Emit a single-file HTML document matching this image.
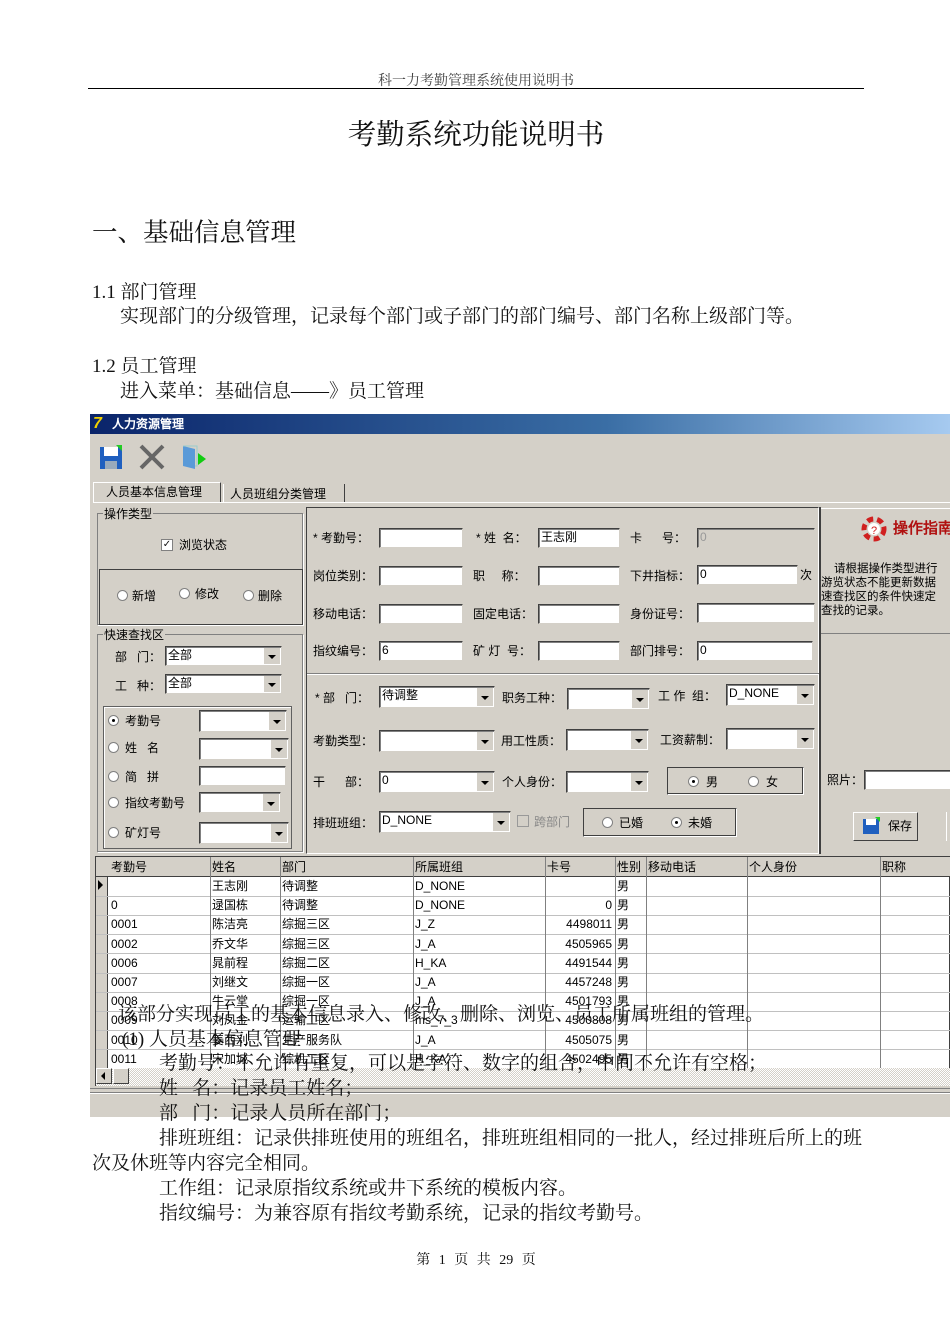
<!DOCTYPE html>
<html><head><meta charset="utf-8"><style>
*{margin:0;padding:0;box-sizing:border-box}
body{width:950px;height:1344px;background:#fff;position:relative;overflow:hidden;font-family:"Liberation Serif","Noto Serif CJK SC",serif;color:#111}
.a{position:absolute;white-space:nowrap}
.t{font-size:19px;line-height:20px}
.u{font-family:"Liberation Sans","WenQuanYi Zen Hei",sans-serif;font-size:12px;line-height:14px;color:#000;position:absolute;white-space:nowrap}
.i{position:absolute;background:#fff;border:1px solid #404040;border-right-color:#d4d0c8;border-bottom-color:#d4d0c8;box-shadow:inset 1px 1px 0 #808080;font-family:"Liberation Sans",sans-serif;font-size:12px;line-height:16px;padding-left:2px;color:#000}
.c:after{content:"";position:absolute;right:1px;top:1px;bottom:1px;width:16px;background:#d4d0c8;border-left:1px solid #fff}
.c:before{content:"";position:absolute;right:5px;top:50%;margin-top:-1px;border:4px solid transparent;border-top:4px solid #000;border-bottom:0;z-index:2}
.g{position:absolute;border:1px solid #808080;box-shadow:1px 1px 0 #fff}
.r{position:absolute;width:11px;height:11px;border-radius:50%;background:#fff;border:1px solid #808080}
.r.on:after{content:"";position:absolute;left:3px;top:3px;width:3px;height:3px;border-radius:50%;background:#000}
.gr{position:absolute;font-family:"Liberation Sans","WenQuanYi Zen Hei",sans-serif;font-size:12px;line-height:19px;color:#000}
</style></head><body>
<div class="a" style="left:0;width:952px;top:70px;text-align:center;font-size:14px;color:#444">科一力考勤管理系统使用说明书</div>
<div class="a" style="left:88px;width:776px;top:88px;height:1px;background:#000"></div>
<div class="a" style="left:0;width:952px;top:112px;text-align:center;font-size:28.5px">考勤系统功能说明书</div>
<div class="a" style="left:92px;top:213px;font-size:25.5px">一、基础信息管理</div>
<div class="a t" style="left:92px;top:283px">1.1 部门管理</div>
<div class="a t" style="left:120px;top:307px">实现部门的分级管理，记录每个部门或子部门的部门编号、部门名称上级部门等。</div>
<div class="a t" style="left:92px;top:357px">1.2 员工管理</div>
<div class="a t" style="left:120px;top:382px">进入菜单：基础信息——》员工管理</div>

<div class="a" style="left:90px;top:414px;width:860px;height:703px;background:#d4d0c8"></div>
<div class="a" style="left:90px;top:414px;width:860px;height:20px;background:linear-gradient(90deg,#0a246a,#3a6ea5 60%,#a6caf0)"></div>
<div class="a" style="left:93px;top:415px;font:bold italic 16px 'Liberation Sans';color:#f0d000">7</div>
<div class="u" style="left:112px;top:417px;color:#fff;font-weight:bold">人力资源管理</div>
<svg class="a" style="left:98px;top:443px" width="30" height="28"><rect x="2" y="4" width="22" height="22" fill="#1f5fbf"/><rect x="6" y="4" width="14" height="9" fill="#fff"/><rect x="7" y="18" width="12" height="8" fill="#9ab"/><path d="M18 2l6 0 0 6z" fill="#2c2"/></svg>
<svg class="a" style="left:138px;top:443px" width="28" height="28"><path d="M3 3L25 25M25 3L3 25" stroke="#666" stroke-width="4"/></svg>
<svg class="a" style="left:180px;top:443px" width="30" height="28"><path d="M3 3l12 3v20l-12-3z" fill="#5a9ad8"/><path d="M3 3h14v20h-2" fill="none" stroke="#9cc"/><path d="M18 10l8 6-8 6z" fill="#1c1"/></svg>
<div class="a" style="left:93px;top:482px;width:128px;height:20px;border:1px solid #fff;border-right-color:#404040;border-bottom:0"></div>
<div class="u" style="left:106px;top:485px">人员基本信息管理</div>
<div class="a" style="left:223px;top:484px;width:122px;height:18px;border-left:1px solid #fff;border-right:1px solid #404040"></div>
<div class="u" style="left:230px;top:487px">人员班组分类管理</div>
<div class="a" style="left:93px;top:502px;width:857px;height:1px;background:#fff"></div>

<div class="g" style="left:97px;top:513px;width:206px;height:112px"></div>
<div class="u" style="left:103px;top:507px;background:#d4d0c8;padding:0 1px">操作类型</div>
<div class="a" style="left:161px;top:539px;width:12px;height:12px;background:#fff;border:1px solid #808080;font:bold 10px/10px 'DejaVu Sans';text-align:center">✓</div>
<div class="u" style="left:179px;top:538px">浏览状态</div>
<div class="a" style="left:99px;top:569px;width:204px;height:56px;border:1px solid #404040"></div>
<div class="r" style="left:117px;top:590px"></div><div class="u" style="left:132px;top:589px">新增</div>
<div class="r" style="left:179px;top:588px"></div><div class="u" style="left:195px;top:587px">修改</div>
<div class="r" style="left:243px;top:590px"></div><div class="u" style="left:258px;top:589px">删除</div>
<div class="g" style="left:97px;top:634px;width:206px;height:218px"></div>
<div class="u" style="left:103px;top:628px;background:#d4d0c8;padding:0 1px">快速查找区</div>
<div class="u" style="left:115px;top:650px">部&nbsp;&nbsp;&nbsp;门：</div>
<div class="i c" style="left:165px;top:646px;width:117px;height:20px">全部</div>
<div class="u" style="left:115px;top:679px">工&nbsp;&nbsp;&nbsp;种：</div>
<div class="i c" style="left:165px;top:674px;width:117px;height:20px">全部</div>
<div class="a" style="left:103px;top:706px;width:189px;height:143px;border:1px solid #606060;box-shadow:inset 1px 1px 0 #fff"></div>
<div class="r on" style="left:108px;top:715px"></div><div class="u" style="left:125px;top:714px">考勤号</div>
<div class="i c" style="left:199px;top:710px;width:88px;height:22px"></div>
<div class="r" style="left:108px;top:742px"></div><div class="u" style="left:125px;top:741px">姓&nbsp;&nbsp;&nbsp;名</div>
<div class="i c" style="left:199px;top:738px;width:90px;height:22px"></div>
<div class="r" style="left:108px;top:771px"></div><div class="u" style="left:125px;top:770px">简&nbsp;&nbsp;&nbsp;拼</div>
<div class="i" style="left:199px;top:766px;width:87px;height:20px"></div>
<div class="r" style="left:108px;top:797px"></div><div class="u" style="left:125px;top:796px">指纹考勤号</div>
<div class="i c" style="left:199px;top:792px;width:82px;height:21px"></div>
<div class="r" style="left:108px;top:827px"></div><div class="u" style="left:125px;top:826px">矿灯号</div>
<div class="i c" style="left:199px;top:822px;width:90px;height:22px"></div>

<div class="a" style="left:306px;top:507px;width:513px;height:347px;border:1px solid #404040;border-right-color:#fff;border-bottom-color:#fff"></div>
<div class="a" style="left:307px;top:673px;width:512px;height:2px;border-top:1px solid #808080;border-bottom:1px solid #fff"></div>
<div class="u" style="left:313px;top:531px">* 考勤号：</div><div class="i" style="left:379px;top:528px;width:84px;height:20px"></div>
<div class="u" style="left:476px;top:531px">* 姓&nbsp;&nbsp;名：</div><div class="i" style="left:538px;top:528px;width:82px;height:20px">王志刚</div>
<div class="u" style="left:630px;top:531px">卡&nbsp;&nbsp;&nbsp;&nbsp;&nbsp;&nbsp;号：</div><div class="i" style="left:697px;top:528px;width:118px;height:20px;background:#d4d0c8;color:#999">0</div>
<div class="u" style="left:313px;top:569px">岗位类别：</div><div class="i" style="left:379px;top:566px;width:84px;height:20px"></div>
<div class="u" style="left:473px;top:569px">职&nbsp;&nbsp;&nbsp;&nbsp;&nbsp;称：</div><div class="i" style="left:538px;top:566px;width:82px;height:20px"></div>
<div class="u" style="left:630px;top:569px">下井指标：</div><div class="i" style="left:697px;top:565px;width:101px;height:20px">0</div><div class="u" style="left:800px;top:568px">次</div>
<div class="u" style="left:313px;top:607px">移动电话：</div><div class="i" style="left:379px;top:604px;width:84px;height:20px"></div>
<div class="u" style="left:473px;top:607px">固定电话：</div><div class="i" style="left:538px;top:604px;width:82px;height:20px"></div>
<div class="u" style="left:630px;top:607px">身份证号：</div><div class="i" style="left:697px;top:603px;width:118px;height:20px"></div>
<div class="u" style="left:313px;top:644px">指纹编号：</div><div class="i" style="left:379px;top:641px;width:84px;height:20px">6</div>
<div class="u" style="left:473px;top:644px">矿&nbsp;灯&nbsp;&nbsp;号：</div><div class="i" style="left:538px;top:641px;width:82px;height:20px"></div>
<div class="u" style="left:630px;top:644px">部门排号：</div><div class="i" style="left:697px;top:641px;width:116px;height:20px">0</div>
<div class="u" style="left:315px;top:691px">* 部&nbsp;&nbsp;&nbsp;门：</div><div class="i c" style="left:379px;top:686px;width:116px;height:22px">待调整</div>
<div class="u" style="left:502px;top:691px">职务工种：</div><div class="i c" style="left:567px;top:688px;width:83px;height:22px"></div>
<div class="u" style="left:658px;top:689px">工&nbsp;作&nbsp;&nbsp;组：</div><div class="i c" style="left:726px;top:684px;width:89px;height:22px">D_NONE</div>
<div class="u" style="left:313px;top:734px">考勤类型：</div><div class="i c" style="left:379px;top:730px;width:116px;height:22px"></div>
<div class="u" style="left:501px;top:734px">用工性质：</div><div class="i c" style="left:566px;top:729px;width:83px;height:22px"></div>
<div class="u" style="left:660px;top:733px">工资薪制：</div><div class="i c" style="left:726px;top:728px;width:89px;height:22px"></div>
<div class="u" style="left:313px;top:775px">干&nbsp;&nbsp;&nbsp;&nbsp;&nbsp;&nbsp;部：</div><div class="i c" style="left:379px;top:771px;width:116px;height:22px">0</div>
<div class="u" style="left:502px;top:775px">个人身份：</div><div class="i c" style="left:566px;top:771px;width:83px;height:22px"></div>
<div class="a" style="left:667px;top:767px;width:137px;height:28px;border:1px solid #404040;border-right-color:#fff;border-bottom-color:#fff;box-shadow:inset -1px -1px 0 #404040"></div>
<div class="r on" style="left:688px;top:776px"></div><div class="u" style="left:706px;top:775px">男</div>
<div class="r" style="left:748px;top:776px"></div><div class="u" style="left:766px;top:775px">女</div>
<div class="u" style="left:313px;top:816px">排班班组：</div><div class="i c" style="left:379px;top:811px;width:132px;height:22px">D_NONE</div>
<div class="a" style="left:517px;top:815px;width:12px;height:12px;border:1px solid #999;background:#d4d0c8"></div><div class="u" style="left:534px;top:815px;color:#888">跨部门</div>
<div class="a" style="left:583px;top:808px;width:154px;height:29px;border:1px solid #404040;border-right-color:#fff;border-bottom-color:#fff;box-shadow:inset -1px -1px 0 #404040"></div>
<div class="r" style="left:602px;top:817px"></div><div class="u" style="left:619px;top:816px">已婚</div>
<div class="r on" style="left:671px;top:817px"></div><div class="u" style="left:688px;top:816px">未婚</div>

<div class="a" style="left:820px;top:508px;width:130px;height:126px;border:1px solid #fff;border-right:0;border-bottom-color:#808080"></div>
<div class="a" style="left:819px;top:507px;width:2px;height:347px;background:#404040"></div>
<svg class="a" style="left:859px;top:515px" width="30" height="28"><circle cx="15" cy="14" r="10" fill="none" stroke="#d02020" stroke-width="5" stroke-dasharray="6 4"/><circle cx="15" cy="14" r="6" fill="#fff"/><text x="12" y="19" font-size="11" fill="#d02020" font-family="Liberation Sans">?</text></svg>
<div class="u" style="left:893px;top:520px;color:#b01010;font-weight:bold;font-size:15px;line-height:17px">操作指南</div>
<div class="u" style="left:834px;top:562px;font-size:11.5px;line-height:14px">请根据操作类型进行</div>
<div class="u" style="left:821px;top:576px;font-size:11.5px;line-height:14px">游览状态不能更新数据</div>
<div class="u" style="left:821px;top:590px;font-size:11.5px;line-height:14px">速查找区的条件快速定</div>
<div class="u" style="left:821px;top:604px;font-size:11.5px;line-height:14px">查找的记录。</div>
<div class="u" style="left:827px;top:773px">照片：</div><div class="i" style="left:864px;top:770px;width:90px;height:20px"></div>
<div class="a" style="left:853px;top:812px;width:65px;height:29px;border:1px solid #fff;border-right-color:#404040;border-bottom-color:#404040"></div>
<svg class="a" style="left:862px;top:816px" width="20" height="20"><rect x="1" y="3" width="16" height="15" fill="#1f5fbf"/><rect x="4" y="3" width="10" height="6" fill="#fff"/><path d="M13 1h5v5z" fill="#2c2"/></svg>
<div class="u" style="left:888px;top:819px">保存</div>
<div class="a" style="left:946px;top:812px;width:4px;height:29px;border-left:1px solid #fff"></div>

<div class="a" style="left:95px;top:856px;width:855px;height:230px;background:#fff;border:1px solid #404040"></div>
<div class="a" style="left:96px;top:857px;width:854px;height:20px;background:#d4d0c8;border-bottom:1px solid #404040"></div>
<div class="a" style="left:96px;top:877px;width:12px;height:191px;background:#d4d0c8;border-right:1px solid #404040"></div>
<div class="a" style="left:98px;top:880px;border:5px solid transparent;border-left:5px solid #000;border-right:0"></div>
<div class="a" style="left:96px;top:1068px;width:854px;height:18px;background:repeating-conic-gradient(#d4d0c8 0 25%,#fff 0 50%) 0 0/2px 2px"></div>
<div class="a" style="left:96px;top:1068px;width:16px;height:16px;background:#d4d0c8;border:1px solid #fff;border-right-color:#404040;border-bottom-color:#404040"></div>
<div class="a" style="left:113px;top:1068px;width:16px;height:16px;background:#d4d0c8;border:1px solid #fff;border-right-color:#404040;border-bottom-color:#404040"></div>
<div class="a" style="left:101px;top:1072px;border:4px solid transparent;border-right:4px solid #000;border-left:0"></div>
<svg class="a" style="left:96px;top:857px" width="854" height="211">
<g stroke="#c0c0c0"><line x1="0" y1="39.5" x2="854" y2="39.5"/><line x1="0" y1="58.5" x2="854" y2="58.5"/><line x1="0" y1="77.5" x2="854" y2="77.5"/><line x1="0" y1="96.5" x2="854" y2="96.5"/><line x1="0" y1="116.5" x2="854" y2="116.5"/><line x1="0" y1="135.5" x2="854" y2="135.5"/><line x1="0" y1="154.5" x2="854" y2="154.5"/><line x1="0" y1="173.5" x2="854" y2="173.5"/><line x1="0" y1="192.5" x2="854" y2="192.5"/></g>
<g stroke="#808080"><line x1="114.5" y1="0" x2="114.5" y2="211"/><line x1="184.5" y1="0" x2="184.5" y2="211"/><line x1="317.5" y1="0" x2="317.5" y2="211"/><line x1="449.5" y1="0" x2="449.5" y2="211"/><line x1="519.5" y1="0" x2="519.5" y2="211"/><line x1="550.5" y1="0" x2="550.5" y2="211"/><line x1="651.5" y1="0" x2="651.5" y2="211"/><line x1="784.5" y1="0" x2="784.5" y2="211"/></g>
</svg>
<div class="gr" style="left:111px;top:858px">考勤号</div><div class="gr" style="left:212px;top:858px">姓名</div><div class="gr" style="left:282px;top:858px">部门</div><div class="gr" style="left:415px;top:858px">所属班组</div><div class="gr" style="left:547px;top:858px">卡号</div><div class="gr" style="left:617px;top:858px">性别</div><div class="gr" style="left:648px;top:858px">移动电话</div><div class="gr" style="left:749px;top:858px">个人身份</div><div class="gr" style="left:882px;top:858px">职称</div>
<div class="gr" style="left:111px;top:877px;line-height:19.2px">&nbsp;<br>0<br>0001<br>0002<br>0006<br>0007<br>0008<br>0009<br>0010<br>0011</div>
<div class="gr" style="left:212px;top:877px;line-height:19.2px">王志刚<br>逯国栋<br>陈洁亮<br>乔文华<br>晁前程<br>刘继文<br>牛云堂<br>刘凤金<br>姜西刈<br>宋加城</div>
<div class="gr" style="left:282px;top:877px;line-height:19.2px">待调整<br>待调整<br>综掘三区<br>综掘三区<br>综掘二区<br>综掘一区<br>综掘一区<br>运输工区<br>生产服务队<br>综机工区</div>
<div class="gr" style="left:415px;top:877px;line-height:19.2px">D_NONE<br>D_NONE<br>J_Z<br>J_A<br>H_KA<br>J_A<br>J_A<br>ms_7_3<br>J_A<br>H_KA</div>
<div class="gr" style="left:547px;top:877px;width:65px;text-align:right;line-height:19.2px">&nbsp;<br>0<br>4498011<br>4505965<br>4491544<br>4457248<br>4501793<br>4500808<br>4505075<br>4502495</div>
<div class="gr" style="left:617px;top:877px;line-height:19.2px">男<br>男<br>男<br>男<br>男<br>男<br>男<br>男<br>男<br>男</div>
<div class="a" style="left:90px;top:1088px;width:860px;height:1px;background:#808080"></div>
<div class="a" style="left:90px;top:1092px;width:860px;height:25px;border-top:1px solid #808080;box-shadow:inset 0 1px 0 #fff"></div>

<div class="a t" style="left:118px;top:1005px">该部分实现员工的基本信息录入、修改、删除、浏览、员工所属班组的管理。</div>
<div class="a t" style="left:122px;top:1030px">(1) 人员基本信息管理</div>
<div class="a t" style="left:159px;top:1054px">考勤号：不允许有重复，可以是字符、数字的组合，中间不允许有空格；</div>
<div class="a t" style="left:159px;top:1079px">姓&nbsp;&nbsp;&nbsp;名：记录员工姓名；</div>
<div class="a t" style="left:159px;top:1104px">部&nbsp;&nbsp;&nbsp;门：记录人员所在部门；</div>
<div class="a t" style="left:159px;top:1129px">排班班组：记录供排班使用的班组名，排班班组相同的一批人，经过排班后所上的班</div>
<div class="a t" style="left:92px;top:1154px">次及休班等内容完全相同。</div>
<div class="a t" style="left:159px;top:1179px">工作组：记录原指纹系统或井下系统的模板内容。</div>
<div class="a t" style="left:159px;top:1204px">指纹编号：为兼容原有指纹考勤系统，记录的指纹考勤号。</div>
<div class="a" style="left:0;width:952px;top:1249px;text-align:center;font-size:14px;word-spacing:5px">第 1 页 共 29 页</div>
</body></html>
